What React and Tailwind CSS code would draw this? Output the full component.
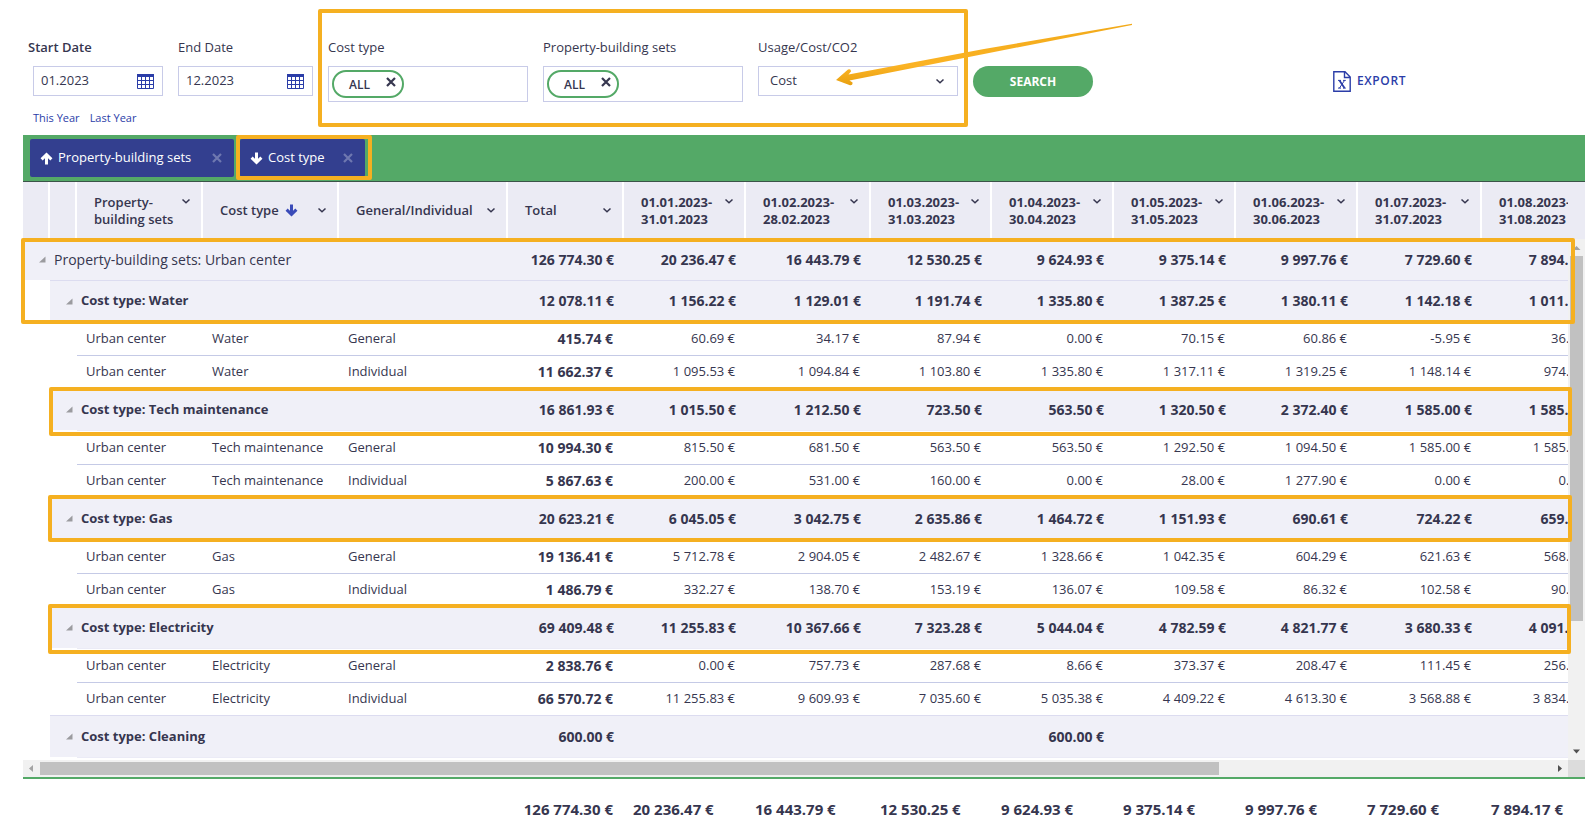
import React, { useState } from 'react';

const MONTHS = [
  ['01.01.2023', '31.01.2023'],
  ['01.02.2023', '28.02.2023'],
  ['01.03.2023', '31.03.2023'],
  ['01.04.2023', '30.04.2023'],
  ['01.05.2023', '31.05.2023'],
  ['01.06.2023', '30.06.2023'],
  ['01.07.2023', '31.07.2023'],
  ['01.08.2023', '31.08.2023'],
];

const TOTALS = ['126 774.30', '20 236.47', '16 443.79', '12 530.25', '9 624.93', '9 375.14', '9 997.76', '7 729.60', '7 894.17'];

const GROUPS = [
  {
    name: 'Water',
    totals: ['12 078.11', '1 156.22', '1 129.01', '1 191.74', '1 335.80', '1 387.25', '1 380.11', '1 142.18', '1 011.04'],
    rows: [
      { kind: 'General', values: ['415.74', '60.69', '34.17', '87.94', '0.00', '70.15', '60.86', '-5.95', '36.94'] },
      { kind: 'Individual', values: ['11 662.37', '1 095.53', '1 094.84', '1 103.80', '1 335.80', '1 317.11', '1 319.25', '1 148.14', '974.10'] },
    ],
  },
  {
    name: 'Tech maintenance',
    totals: ['16 861.93', '1 015.50', '1 212.50', '723.50', '563.50', '1 320.50', '2 372.40', '1 585.00', '1 585.00'],
    rows: [
      { kind: 'General', values: ['10 994.30', '815.50', '681.50', '563.50', '563.50', '1 292.50', '1 094.50', '1 585.00', '1 585.00'] },
      { kind: 'Individual', values: ['5 867.63', '200.00', '531.00', '160.00', '0.00', '28.00', '1 277.90', '0.00', '0.00'] },
    ],
  },
  {
    name: 'Gas',
    totals: ['20 623.21', '6 045.05', '3 042.75', '2 635.86', '1 464.72', '1 151.93', '690.61', '724.22', '659.00'],
    rows: [
      { kind: 'General', values: ['19 136.41', '5 712.78', '2 904.05', '2 482.67', '1 328.66', '1 042.35', '604.29', '621.63', '568.90'] },
      { kind: 'Individual', values: ['1 486.79', '332.27', '138.70', '153.19', '136.07', '109.58', '86.32', '102.58', '90.10'] },
    ],
  },
  {
    name: 'Electricity',
    totals: ['69 409.48', '11 255.83', '10 367.66', '7 323.28', '5 044.04', '4 782.59', '4 821.77', '3 680.33', '4 091.10'],
    rows: [
      { kind: 'General', values: ['2 838.76', '0.00', '757.73', '287.68', '8.66', '373.37', '208.47', '111.45', '256.90'] },
      { kind: 'Individual', values: ['66 570.72', '11 255.83', '9 609.93', '7 035.60', '5 035.38', '4 409.22', '4 613.30', '3 568.88', '3 834.20'] },
    ],
  },
  {
    name: 'Cleaning',
    totals: ['600.00', '', '', '', '600.00', '', '', '', ''],
    rows: [],
  },
];

const euro = (value) => (value ? `${value} €` : '');

function Columns() {
  return (
    <colgroup>
      <col className="w-[27px]" />
      <col className="w-[27px]" />
      <col className="w-[126px]" />
      <col className="w-[136px]" />
      <col className="w-[169px]" />
      <col className="w-[116px]" />
      <col className="w-[122px]" />
      <col className="w-[125px]" />
      <col className="w-[121px]" />
      <col className="w-[122px]" />
      <col className="w-[122px]" />
      <col className="w-[122px]" />
      <col className="w-[124px]" />
      <col className="w-[124px]" />
    </colgroup>
  );
}

function CalendarIcon() {
  return (
    <svg width="17" height="15" viewBox="0 0 17 15" className="shrink-0" fill="none" stroke="#2b3da8">
      <path d="M.5 1V14.500H16.500V1M4.500 2V14.500M8.500 2V14.500M12.500 2V14.500M.5 6.500H16.500M.5 10.500H16.500" />
      <path d="M0 1.500H17" strokeWidth="3" />
    </svg>
  );
}

function Chevron() {
  return (
    <svg width="10" height="7" viewBox="0 0 10 7" className="shrink-0" fill="none" stroke="#36364f" strokeWidth="1.5">
      <path d="M1.500 1.500 5 4.800 8.500 1.500" />
    </svg>
  );
}

function SortArrow({ up, color }) {
  return (
    <svg width="13" height="13" viewBox="0 0 13 13" className="shrink-0" fill="none" stroke={color} strokeWidth="3">
      <path d={up ? 'M6.500 12.500V3M1.600 7.400 6.500 2.700 11.400 7.400' : 'M6.500 .5V10M1.600 5.600 6.500 10.300 11.400 5.600'} />
    </svg>
  );
}

function Cross({ color }) {
  return (
    <svg width="10" height="10" viewBox="0 0 10 10" fill="none" stroke={color} strokeWidth="2.200">
      <path d="M1 1 9 9M9 1 1 9" />
    </svg>
  );
}

function Caret() {
  return (
    <svg width="7" height="7" viewBox="0 0 7 7" className="shrink-0">
      <path d="M6.500 0.500V6.500H0Z" fill="#9b9b9f" />
    </svg>
  );
}

function ExcelIcon() {
  return (
    <svg width="18" height="21" viewBox="0 0 18 21" fill="none" stroke="#2b3da8" strokeWidth="1.400">
      <path d="M.8 .8H12L17.200 6V20.200H.8ZM11.500 1V6.500H17" />
      <path d="M6.500 9.500 11.500 17" strokeWidth="1.800" />
      <path d="M11.500 9.500 6.500 17M5 9.400H8M10 9.400H12.800M5 17.100H8M10 17.100H12.800" strokeWidth="1" />
    </svg>
  );
}

function TagField({ id, label }) {
  return (
    <div className="w-[200px]">
      <label htmlFor={id} className="block h-[18px] leading-[18px]">{label}</label>
      <div className="mt-[10px] flex h-9 items-center border border-[#c8cbe8] px-[3px]">
        <span className="flex h-7 w-[72px] shrink-0 items-center justify-between rounded-full border-2 border-[#54a967] pl-[15px] pr-[6px] pt-px text-xs font-semibold">
          ALL
          <button type="button" aria-label={`Remove ${label}`} className="pb-[5px]">
            <Cross color="#36364f" />
          </button>
        </span>
        <input id={id} className="w-full min-w-0 outline-none" />
      </div>
    </div>
  );
}

function HeaderCell({ lines, sorted, month }) {
  return (
    <th
      scope="col"
      className={`h-[57px] border-r-2 border-white pl-[17px] pr-[10px] text-left align-middle ${month ? 'font-bold' : 'font-semibold'}`}
    >
      <div className={`flex justify-between ${lines.length > 1 ? 'items-start' : 'items-center'}`}>
        <span className="flex items-center gap-[6px] whitespace-nowrap leading-[17px]">
          <span>
            {lines.map((line) => (
              <span key={line} className="block">{line}</span>
            ))}
          </span>
          {sorted && <SortArrow color="#3a4bb8" />}
        </span>
        <span className={lines.length > 1 ? 'pt-[4px]' : ''}>
          <Chevron />
        </span>
      </div>
    </th>
  );
}

// Orange frame drawn above the grid
function Frame({ className }) {
  return <div className={`pointer-events-none absolute z-10 rounded-xs border-4 border-[#f5b021] ${className}`} />;
}

function Filters() {
  const [start, setStart] = useState('01.2023');
  const [end, setEnd] = useState('12.2023');

  return (
    <form className="relative flex items-start pb-2 pl-7 pt-[38px]" onSubmit={(e) => e.preventDefault()}>
      <div className="w-[150px]">
        <label htmlFor="start" className="block h-[18px] font-semibold leading-[18px]">Start Date</label>
        <div className="ml-[5px] mt-[10px] flex h-[30px] w-[130px] items-center border border-[#c8cbe8] pl-[7px] pr-2">
          <input id="start" value={start} onChange={(e) => setStart(e.target.value)} className="w-full min-w-0 font-medium outline-none" />
          <CalendarIcon />
        </div>
        <div className="ml-[5px] mt-[13px] flex gap-[10px] text-[11px] leading-[18px] text-[#2b3da8]">
          <a href="#this-year">This Year</a>
          <a href="#last-year">Last Year</a>
        </div>
      </div>
      <div className="mr-[15px] w-[135px]">
        <label htmlFor="end" className="block h-[18px] leading-[18px]">End Date</label>
        <div className="mt-[10px] flex h-[30px] items-center border border-[#c8cbe8] pl-[7px] pr-2">
          <input id="end" value={end} onChange={(e) => setEnd(e.target.value)} className="w-full min-w-0 outline-none" />
          <CalendarIcon />
        </div>
      </div>
      <div className="flex gap-[15px]">
        <TagField id="cost-type" label="Cost type" />
        <TagField id="sets" label="Property-building sets" />
        <div className="w-[200px]">
          <label htmlFor="unit" className="block h-[18px] leading-[18px]">Usage/Cost/CO2</label>
          <div className="mt-[10px] flex h-[30px] items-center border border-[#c8cbe8] pr-3">
            <select id="unit" defaultValue="Cost" className="h-full w-full appearance-none pl-[11px] outline-none">
              <option>Usage</option>
              <option>Cost</option>
              <option>CO2</option>
            </select>
            <Chevron />
          </div>
        </div>
        <button type="submit" className="mt-7 h-[31px] w-[120px] rounded-full bg-[#54a967] text-xs font-bold text-white">SEARCH</button>
      </div>
      <button type="button" className="ml-[240px] mt-7 flex h-[30px] items-center gap-[6px] text-xs font-semibold tracking-wider text-[#2b3da8]">
        <ExcelIcon />
        EXPORT
      </button>

      <Frame className="left-[318px] top-[9px] h-[118px] w-[650px]" />
      <svg className="pointer-events-none absolute left-[834px] top-[20px] z-20" width="300" height="70" viewBox="0 0 300 70">
        <defs>
          <linearGradient id="arrow" x1="0" y1="0" x2="0.1" y2="1">
            <stop offset="0" stopColor="#f0a818" />
            <stop offset="0.7" stopColor="#fbb324" />
            <stop offset="1" stopColor="#e8a010" />
          </linearGradient>
        </defs>
        <path d="M2 60 14 49.500Q17 48.500 17 51.500L14.500 54.500 150 29 298 3.800 298 5 150 34 15.500 60.500 18.500 62.500Q19 65.500 16 65.200Z" fill="url(#arrow)" />
      </svg>
    </form>
  );
}

function GroupCells({ values }) {
  return values.map((value, i) => (
    <td key={i} className="border-t border-[#dcdcf0] bg-[#f0f0f8] pr-[10px] text-right text-sm font-bold">{euro(value)}</td>
  ));
}

function Grid() {
  return (
    <div className="relative ml-[23px]">
      <div className="flex h-[47px] items-start gap-[6px] border-b border-[#3b5348] bg-[#54a967] pl-[7px] pt-1 text-white">
        <div className="flex h-[38px] w-[204px] items-center rounded-xs bg-[#333f8f] pl-[10px] pr-3">
          <SortArrow up color="#fff" />
          <span className="ml-[5px] flex-1">Property-building sets</span>
          <button type="button" aria-label="Remove Property-building sets"><Cross color="#6f78b0" /></button>
        </div>
        <div className="flex h-[38px] w-[125px] items-center rounded-xs bg-[#333f8f] pl-[10px] pr-3">
          <SortArrow color="#fff" />
          <span className="ml-[5px] flex-1">Cost type</span>
          <button type="button" aria-label="Remove Cost type"><Cross color="#6f78b0" /></button>
        </div>
      </div>

      <div className="bg-[#ebebf4] pr-[17px]">
        <div className="overflow-hidden">
          <table className="w-[1583px] table-fixed border-separate border-spacing-0">
            <Columns />
            <thead>
              <tr>
                <td className="border-r-2 border-white" />
                <td className="border-r-2 border-white" />
                <HeaderCell lines={['Property-', 'building sets']} />
                <HeaderCell lines={['Cost type']} sorted />
                <HeaderCell lines={['General/Individual']} />
                <HeaderCell lines={['Total']} />
                {MONTHS.map(([from, to]) => (
                  <HeaderCell key={from} lines={[`${from}-`, to]} month />
                ))}
              </tr>
            </thead>
          </table>
        </div>
      </div>

      <div className="flex">
        <div className="min-w-0 flex-1 overflow-hidden">
          <table className="w-[1583px] table-fixed border-separate border-spacing-0">
            <Columns />
            <tbody>
              <tr className="h-[41px]">
                <td colSpan={5} className="bg-[#f0f0f8] pl-4">
                  <span className="flex items-center gap-2 text-sm"><Caret />Property-building sets: Urban center</span>
                </td>
                {TOTALS.map((value, i) => (
                  <td key={i} className="bg-[#f0f0f8] pr-[10px] text-right text-sm font-bold">{euro(value)}</td>
                ))}
              </tr>
              {GROUPS.map((group) => (
                <React.Fragment key={group.name}>
                  <tr className={group.name === 'Water' ? 'h-[41px]' : 'h-[42px]'}>
                    <td />
                    <td colSpan={4} className="border-t border-[#dcdcf0] bg-[#f0f0f8] pl-4">
                      <span className="flex items-center gap-2 font-bold"><Caret />Cost type: {group.name}</span>
                    </td>
                    <GroupCells values={group.totals} />
                  </tr>
                  {group.rows.map((row, r) => (
                    <tr key={row.kind} className={r === 0 ? 'h-[34px]' : 'h-[33px]'}>
                      <td />
                      <td />
                      {['Urban center', group.name, row.kind].map((text) => (
                        <td key={text} className={`whitespace-nowrap border-t pl-[9px] ${r === 0 ? 'border-[#ebebf6]' : 'border-[#c5cae6]'}`}>{text}</td>
                      ))}
                      {row.values.map((value, i) => (
                        <td
                          key={i}
                          className={`border-t pr-[11px] text-right ${i === 0 ? 'text-sm font-bold' : ''} ${r === 0 ? 'border-[#ebebf6]' : 'border-[#c5cae6]'}`}
                        >
                          {euro(value)}
                        </td>
                      ))}
                    </tr>
                  ))}
                </React.Fragment>
              ))}
              <tr className="h-[3px]">
                <td />
                <td />
                <td colSpan={12} className="border-t border-[#ebebf6]" />
              </tr>
            </tbody>
          </table>
        </div>
        {/* vertical scrollbar */}
        <div className="flex w-[17px] shrink-0 flex-col items-center bg-[#f1f1f1]">
          <svg width="17" height="17" viewBox="0 0 17 17" className="shrink-0"><path d="M4.500 11 8.500 7 12.500 11Z" fill="#a3a3a3" /></svg>
          <div className="h-[365px] w-[13px] bg-[#c1c1c1]" />
          <svg width="17" height="17" viewBox="0 0 17 17" className="mt-auto shrink-0"><path d="M5 6.500H12L8.500 10.500Z" fill="#505050" /></svg>
        </div>
      </div>

      {/* horizontal scrollbar */}
      <div className="flex h-[17px] border-r-[17px] border-[#dcdcdc] bg-[#f1f1f1]">
        <svg width="17" height="17" viewBox="0 0 17 17" className="shrink-0"><path d="M10 5V12L6 8.500Z" fill="#a3a3a3" /></svg>
        <div className="min-w-0 flex-1 py-[2px]">
          <div className="h-full w-[78%] bg-[#c1c1c1]" />
        </div>
        <svg width="17" height="17" viewBox="0 0 17 17" className="shrink-0"><path d="M7 5V12L11 8.500Z" fill="#505050" /></svg>
      </div>

      <div className="overflow-hidden border-t-2 border-[#54a967]">
        <table className="w-[1583px] table-fixed">
          <Columns />
          <tbody>
            <tr className="h-[52px] text-[15px] font-bold">
              <td colSpan={5} />
              {TOTALS.map((value, i) => (
                <td key={i} className={`whitespace-nowrap pt-[9px] ${i === 0 ? 'pr-[11px] text-right' : 'pl-[9px]'}`}>{euro(value)}</td>
              ))}
            </tr>
          </tbody>
        </table>
      </div>

      <Frame className="left-[213px] top-0 h-[45px] w-[136px]" />
      <Frame className="-left-[2px] right-[10px] top-[103px] h-[86px]" />
      <Frame className="left-[26px] right-[13px] top-[252px] h-[49px]" />
      <Frame className="left-[25px] right-[13px] top-[360px] h-[47px]" />
      <Frame className="left-[25px] right-[14px] top-[469px] h-[50px]" />
    </div>
  );
}

function App() {
  return (
    <div className="min-h-screen overflow-hidden bg-white font-['Open_Sans','Noto_Sans',sans-serif] text-[13px] text-[#36364f]">
      <Filters />
      <Grid />
    </div>
  );
}

export default App;
